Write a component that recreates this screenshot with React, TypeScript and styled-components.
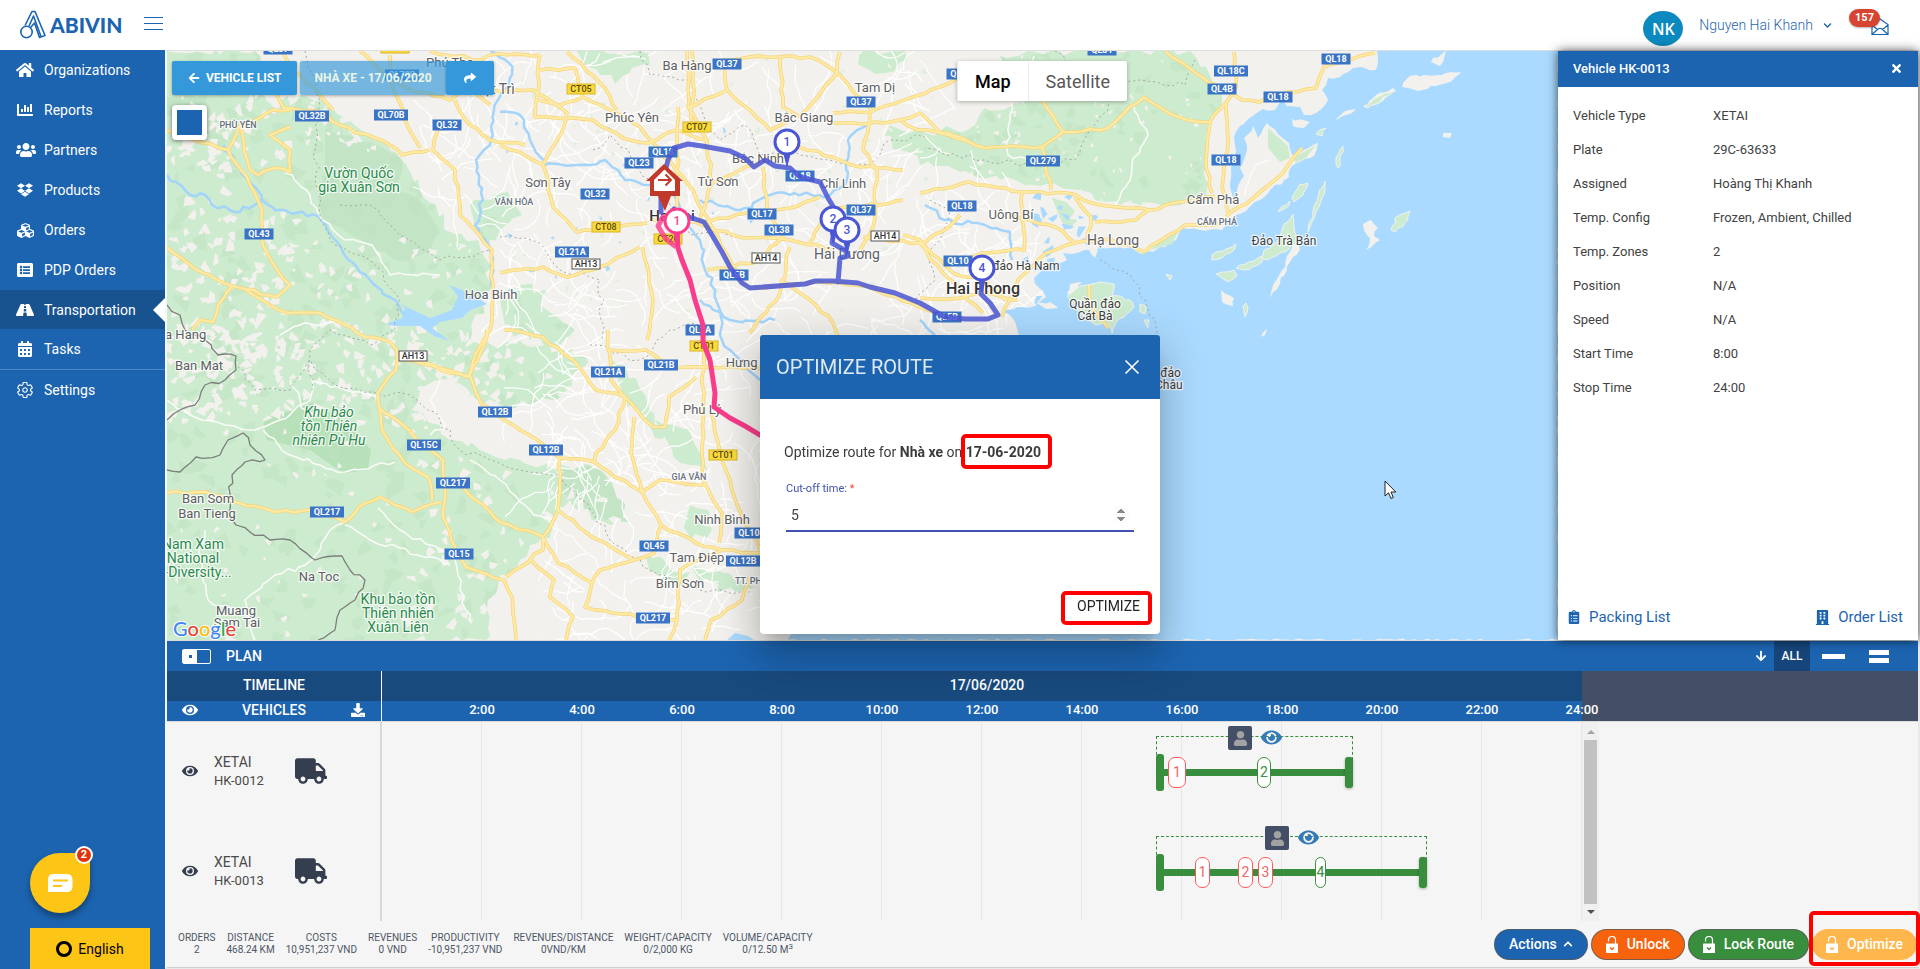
import React from "react";
import styled, { createGlobalStyle, css } from "styled-components";
import {
  FaArrowDown,
  FaArrowLeft,
  FaBuilding,
  FaCalendarAlt,
  FaChartBar,
  FaChevronDown,
  FaChevronUp,
  FaClipboardList,
  FaCubes,
  FaDownload,
  FaDropbox,
  FaEye,
  FaHome,
  FaListAlt,
  FaRoad,
  FaShare,
  FaTimes,
  FaTruck,
  FaUser,
  FaUsers,
} from "react-icons/fa";
import { IoSettingsOutline } from "react-icons/io5";

const BLUE = "#1c64b0";
const NAVY = "#194a7d";
const GREEN = "#388e3c";
const MARK = "#ff0000";

const GlobalStyle = createGlobalStyle`
  *, *::before, *::after { box-sizing: border-box; }
  body { margin: 0; background: #e9e9e9; font-family: Roboto, "Noto Sans", sans-serif; font-size: 14px; color: #424242; }
  button, input { font: inherit; color: inherit; }
  button { border: 0; margin: 0; padding: 0; background: none; cursor: pointer; }
  a { text-decoration: none; color: inherit; }
  svg { display: block; flex: none; }
`;

/* ---------- page frame ---------- */

const Page = styled.div`
  display: flex;
  flex-direction: column;
  min-height: 100vh;
`;

const TopBar = styled.header`
  display: flex;
  align-items: center;
  height: 50px;
  padding: 0 31px 0 20px;
  background: #fff;
`;

const Logo = styled.a`
  display: flex;
  align-items: center;
  gap: 4px;
  color: ${BLUE};
  font: 900 21px/24px Lato, sans-serif;
`;

const MenuButton = styled.button`
  display: flex;
  flex-direction: column;
  gap: 5px;
  width: 19px;
  margin-left: 22px;
  margin-bottom: 3px;
  span { height: 1px; background: ${BLUE}; }
`;

const Account = styled.div`
  display: flex;
  align-items: center;
  gap: 16px;
  margin-left: auto;
`;

const Avatar = styled.div`
  display: grid;
  place-items: center;
  width: 40px;
  height: 35px;
  margin-top: 7px;
  border-radius: 50%;
  background: #0c8abf;
  color: #fff;
  font: 600 16px/20px "Open Sans", sans-serif;
`;

const UserButton = styled.button`
  display: flex;
  align-items: center;
  gap: 10px;
  color: ${BLUE};
  font-size: 14px;
  font-weight: 300;
`;

const Inbox = styled.button`
  position: relative;
  width: 18px;
  height: 18px;
  margin: 4px 0 0 23px;
  color: ${BLUE};
`;

const InboxCount = styled.span`
  position: absolute;
  right: 9px;
  top: -9px;
  padding: 0 6px;
  border-radius: 9px;
  background: #d84432;
  color: #fff;
  font: 700 11px/18px Roboto, sans-serif;
  box-shadow: 0 1px 2px rgba(0, 0, 0, 0.3);
`;

const Body = styled.div`
  display: flex;
  flex: 1;
`;

/* ---------- sidebar ---------- */

const Sidebar = styled.nav`
  display: flex;
  flex-direction: column;
  flex: none;
  width: 165px;
  background: ${BLUE};
`;

const NavLink = styled.a<{ $active?: boolean; $split?: boolean }>`
  position: relative;
  display: flex;
  align-items: center;
  gap: 10px;
  height: ${(p) => (p.$active ? 39 : 40)}px;
  padding-left: 16px;
  color: #fff;
  font-size: 14px;
  ${(p) => p.$split && css`border-top: 1px solid #4c88c6;`}
  ${(p) =>
    p.$active &&
    css`
      background: #18528f;
      &::after {
        content: "";
        position: absolute;
        right: 0;
        top: 8px;
        border: 12px solid transparent;
        border-left-width: 0;
        border-right-color: #fff;
      }
    `}
`;

const NavIcon = styled.span`
  display: grid;
  place-items: center;
  width: 18px;
`;

const SideFooter = styled.div`
  display: flex;
  flex-direction: column;
  align-items: flex-start;
  gap: 15px;
  width: 120px;
  margin: auto 0 0 30px;
`;

const ChatButton = styled.button`
  position: relative;
  display: grid;
  place-items: center;
  width: 60px;
  height: 60px;
  border-radius: 50% 4px 50% 50%;
  background: #fdc516;
  box-shadow: 0 4px 6px rgba(0, 0, 0, 0.35);
`;

const ChatCount = styled.span`
  position: absolute;
  right: -3px;
  top: -7px;
  width: 18px;
  height: 18px;
  border: 2px solid #fff;
  border-radius: 50%;
  background: #e1330d;
  color: #fff;
  font: 700 11px/14px Roboto, sans-serif;
  text-align: center;
`;

const LanguageButton = styled.button`
  display: flex;
  align-items: center;
  justify-content: center;
  gap: 6px;
  width: 100%;
  height: 41px;
  background: #fdc516;
  color: #000;
`;

const Ring = styled.span`
  width: 16px;
  height: 16px;
  border: 3px solid #000;
  border-radius: 50%;
`;

const Main = styled.main`
  display: flex;
  flex-direction: column;
  flex: 1;
  min-width: 0;
  margin: 0 2px 1px 0;
  border-top: 1px solid #dedede;
  border-left: 2px solid #f4f8fb;
`;

/* ---------- map row ---------- */

const MapRow = styled.section`
  display: flex;
  flex: 1;
  min-height: 400px;
  border-bottom: 1px solid #dcdcdc;
`;

const MapArea = styled.div`
  position: relative;
  flex: 1;
  min-width: 0;
  overflow: hidden;
  background: #aadaff;
`;

const MapCanvas = styled.svg`
  position: absolute;
  inset: 0;
  width: 100%;
  height: 100%;
  font-family: Roboto, "Noto Sans", sans-serif;
`;

const MapTools = styled.div`
  position: absolute;
  left: 5px;
  top: 10px;
  display: flex;
  flex-direction: column;
  gap: 10px;
`;

const ToolRow = styled.div`
  display: flex;
`;

const ToolButton = styled.button<{ $clear?: boolean; $gap?: boolean; $pad: number }>`
  display: flex;
  align-items: center;
  gap: 6px;
  height: 34px;
  margin-right: ${(p) => (p.$gap ? 3 : 0)}px;
  padding: 0 ${(p) => p.$pad}px;
  border-radius: 2px;
  background: ${(p) => (p.$clear ? "rgba(52, 152, 219, 0.66)" : "#3498db")};
  color: ${(p) => (p.$clear ? "#eaf5e6" : "#fff")};
  font-size: 12px;
  font-weight: 700;
  box-shadow: 0 1px 3px rgba(0, 0, 0, 0.3);
`;

const AreaButton = styled.button`
  width: 35px;
  height: 35px;
  border: 5px solid #fff;
  border-radius: 4px;
  background: ${BLUE};
  box-shadow: 0 1px 4px rgba(0, 0, 0, 0.5);
`;

const MapType = styled.div`
  position: absolute;
  left: 790px;
  top: 10px;
  display: flex;
  border-radius: 2px;
  background: #fff;
  box-shadow: 0 1px 4px rgba(0, 0, 0, 0.3);
`;

const MapTypeButton = styled.button<{ $on?: boolean }>`
  height: 40px;
  padding: 0 17px;
  border-left: 1px solid #ececec;
  color: ${(p) => (p.$on ? "#000" : "#565656")};
  font-size: 18px;
  font-weight: ${(p) => (p.$on ? 500 : 400)};
`;

const Panel = styled.aside`
  position: relative;
  display: flex;
  flex-direction: column;
  flex: none;
  width: 360px;
  background: #fff;
  box-shadow: 0 0 10px rgba(0, 0, 0, 0.7);
`;

const PanelHead = styled.div`
  display: flex;
  align-items: center;
  justify-content: space-between;
  height: 36px;
  padding: 0 15px 2px;
  background: ${BLUE};
  color: #fff;
  font-size: 13px;
  font-weight: 500;
`;

const Facts = styled.dl`
  display: grid;
  grid-template-columns: 140px 1fr;
  margin: 12px 15px 0;
  font-size: 13px;
  line-height: 34px;
  dd { margin: 0; }
`;

const PanelLinks = styled.div`
  display: flex;
  justify-content: space-between;
  margin-top: auto;
  padding: 0 15px 13px 9px;
  color: ${BLUE};
  font-size: 15px;
  line-height: 20px;
  a { display: flex; align-items: center; gap: 8px; }
`;

/* ---------- plan ---------- */

const PlanBar = styled.div`
  display: flex;
  align-items: center;
  height: 30px;
  padding: 0 16px 0 15px;
  background: ${BLUE};
  color: #fff;
  font-weight: 500;
`;

const PlanToggle = styled.button`
  display: flex;
  width: 29px;
  height: 15px;
  margin-right: 15px;
  border: 1px solid #fff;
  border-radius: 2px;
  &::before { content: ""; width: 14px; height: 100%; border: solid #fff; border-width: 5px 5px 5px 6px; background: ${BLUE}; }
`;

const PlanTools = styled.div`
  display: flex;
  align-items: center;
  height: 100%;
  margin-left: auto;
`;

const PlanTool = styled.button<{ $on?: boolean; $width: number }>`
  display: flex;
  flex-direction: column;
  align-items: center;
  justify-content: center;
  gap: 3px;
  width: ${(p) => p.$width}px;
  height: 100%;
  background: ${(p) => (p.$on ? "#15457a" : "transparent")};
  font-size: 12px;
`;

const Dash = styled.span<{ $width: number }>`
  width: ${(p) => p.$width}px;
  height: 5px;
  background: #fff;
`;

const TimeRow = styled.div<{ $height: number; $tone: string }>`
  display: flex;
  height: ${(p) => p.$height}px;
  background: ${(p) => p.$tone};
  color: #fff;
  font-weight: 500;
`;

const HeadCell = styled.div`
  display: grid;
  grid-template-columns: 46px 1fr 46px;
  align-items: center;
  justify-items: center;
  flex: none;
  width: 215px;
  padding-bottom: 2px;
  border-right: 1px solid #fff;
  text-align: center;
  font-size: 14px;
`;

const Hours = styled.div`
  position: relative;
  flex: 25 0 0;
  line-height: 28px;
  text-align: center;
`;

const Rest = styled.div`
  flex: 7 0 0;
  background: #434f66;
`;

const Hour = styled.span`
  position: absolute;
  top: 1px;
  width: 50px;
  margin-left: -25px;
  z-index: 1;
  font-size: 13px;
  line-height: 16px;
  text-align: center;
`;

const DayLabel = styled.span`
  padding-left: 10px;
`;

const Schedule = styled.div`
  display: flex;
  background: #f5f5f5;
  border-top: 1px solid #dcdcdc;
`;

const Vehicles = styled.div`
  flex: none;
  width: 215px;
  border-right: 2px solid #d9d9d9;
`;

const VehicleRow = styled.div`
  display: grid;
  grid-template-columns: 16px 65px 32px;
  column-gap: 16px;
  align-items: center;
  height: 100px;
  padding: 0 0 2px 15px;
  color: #343e4f;
  &:last-child { height: 99px; }
`;

const VehicleName = styled.div`
  color: #4a4a4a;
  font-size: 14px;
  line-height: 20px;
  small { display: block; font-size: 13px; line-height: 18px; }
`;

const Tracks = styled.div`
  flex: 25 0 0;
  background-image: linear-gradient(to left, #e7e7e7 1px, transparent 1px);
  background-size: calc(100% / 12) 100%;
`;

const Track = styled.div`
  position: relative;
  height: 100px;
  &:last-child { height: 99px; }
`;

/* everything on a track sits at its hour, so it is placed by percent of the day */
const Span = styled.div`
  position: absolute;
  top: 14px;
  height: 40px;
  border: 1px dashed ${GREEN};
  border-bottom: 0;
`;

const Line = styled.div`
  position: absolute;
  top: 47px;
  height: 7px;
  background: ${GREEN};
`;

const Handle = styled.div<{ $end?: boolean }>`
  position: absolute;
  top: ${(p) => (p.$end ? 35 : 32)}px;
  width: 8px;
  height: ${(p) => (p.$end ? 31 : 37)}px;
  margin-left: ${(p) => (p.$end ? -8 : 0)}px;
  border-radius: 3px;
  background: ${GREEN};
  box-shadow: ${(p) => (p.$end ? "0 1px 3px rgba(0,0,0,.3)" : "none")};
`;

const Stop = styled.button<{ $late?: boolean }>`
  position: absolute;
  top: 35px;
  height: 31px;
  border: 1px solid ${(p) => (p.$late ? "#ff5a5a" : GREEN)};
  border-radius: 7px;
  background: #fff;
  color: ${(p) => (p.$late ? "#f06464" : GREEN)};
  font-size: 14px;
  line-height: 29px;
  text-align: center;
`;

const Driver = styled.button`
  position: absolute;
  top: 4px;
  display: grid;
  place-items: center;
  width: 24px;
  height: 24px;
  border-radius: 2px;
  background: #434f66;
  color: #a2a2a2;
`;

const Watch = styled.button`
  position: absolute;
  top: 5px;
  margin-left: 33px;
  color: #337ab7;
`;

const ScrollArea = styled.div`
  flex: 7 0 0;
`;

const ScrollRail = styled.div`
  display: flex;
  flex-direction: column;
  align-items: center;
  justify-content: space-between;
  width: 17px;
  height: 100%;
  padding: 8px 0 7px;
  background: #f0f0f0;
`;

const ScrollThumb = styled.div`
  flex: 1;
  width: 13px;
  margin: 6px 0;
  background: #c1c1c1;
`;

const Tip = styled.span<{ $up?: boolean }>`
  border: solid transparent;
  border-width: 0 4px;
  ${(p) => (p.$up ? "border-bottom: 4px solid #a3a3a3;" : "border-top: 4px solid #505050;")}
`;

const Footer = styled.footer`
  display: flex;
  align-items: center;
  height: 47px;
  padding: 0 1px 0 11px;
  background: #f5f5f5;
  border-bottom: 1px solid #cfcfcf;
`;

const Totals = styled.dl`
  display: flex;
  gap: 11px;
  margin: 0;
  color: #4d5666;
  font-size: 10px;
  line-height: 12px;
  text-align: center;
  text-transform: uppercase;
  dd { margin: 0; }
  sup { font-size: 8px; line-height: 0; }
`;

const Actions = styled.div`
  display: flex;
  gap: 3px;
  margin-left: auto;
`;

const Pill = styled.button<{ $tone: string; $flat?: boolean; $tight?: boolean }>`
  position: relative;
  display: flex;
  align-items: center;
  justify-content: center;
  gap: ${(p) => (p.$tight ? 6 : 9)}px;
  height: 31px;
  padding: 0 ${(p) => (p.$flat ? 13 : 14)}px;
  border: 1px solid ${(p) => (p.$flat ? p.$tone : "rgba(90, 90, 90, 0.8)")};
  border-radius: 16px;
  background: ${(p) => p.$tone};
  color: #fff;
  font-size: 14px;
  font-weight: 500;
`;

const Highlight = styled.span<{ $inset: string }>`
  position: absolute;
  inset: ${(p) => p.$inset};
  border: 4px solid ${MARK};
  border-radius: 5px;
  pointer-events: none;
`;

/* ---------- dialog ---------- */

const DialogLayer = styled.div`
  position: fixed;
  inset: 0;
  z-index: 5;
  display: grid;
  place-items: center;
  pointer-events: none;
`;

const Dialog = styled.form`
  width: 400px;
  border-radius: 4px;
  background: #fff;
  box-shadow: 0 11px 15px -7px rgba(0, 0, 0, 0.2), 0 24px 38px 3px rgba(0, 0, 0, 0.14), 0 9px 46px 8px rgba(0, 0, 0, 0.12);
  pointer-events: auto;
`;

const DialogHead = styled.div`
  display: flex;
  align-items: center;
  justify-content: space-between;
  height: 64px;
  padding: 0 20px 0 16px;
  border-radius: 3px 3px 0 0;
  background: ${BLUE};
  color: #dfe9f4;
  h2 { margin: 0; font-size: 20px; font-weight: 400; }
`;

const DialogBody = styled.div`
  padding: 43px 24px 0;
  p { margin: 0; line-height: 20px; color: #3c3c3c; }
`;

const Date = styled.b`
  position: relative;
`;

const Field = styled.label`
  display: block;
  margin: 18px 2px 0;
  color: #3f51b5;
  font-size: 11px;
  line-height: 18px;
  i { color: #f44336; font-style: normal; }
`;

const NumberInput = styled.input`
  display: block;
  width: 100%;
  height: 34px;
  padding: 6px 5px 4px;
  border: 0;
  border-bottom: 2px solid #3f51b5;
  outline: 0;
  background: none;
  color: #424242;
  font-size: 14px;
  &::-webkit-inner-spin-button { opacity: 1; height: 16px; }
`;

const DialogActions = styled.div`
  display: flex;
  justify-content: flex-end;
  padding: 56px 20px 10px 0;
`;

const OptimizeButton = styled.button`
  position: relative;
  height: 36px;
  color: #222;
  font-size: 14px;
`;

const Pointer = styled.svg`
  position: absolute;
  left: 1217px;
  top: 429px;
`;

/* ---------- map drawing ---------- */

type Pt = [number, number];

const rng = (seed: number) => () => {
  seed = (seed + 0x6d2b79f5) | 0;
  let t = Math.imul(seed ^ (seed >>> 15), 1 | seed);
  t = (t + Math.imul(t ^ (t >>> 7), 61 | t)) ^ t;
  return ((t ^ (t >>> 14)) >>> 0) / 4294967296;
};

const parse = (s: string): Pt[] => s.split(" ").map((p) => p.split(",").map(Number) as Pt);

/* breaks a coarse polyline into short wobbling steps, as surveyed roads look */
const wobble = (s: string, amount: number, step = 9): string => {
  const pts = parse(s);
  const rand = rng(pts[0][0] * 31 + pts[0][1]);
  const out: Pt[] = [pts[0]];
  for (let i = 1; i < pts.length; i++) {
    const [ax, ay] = pts[i - 1];
    const [bx, by] = pts[i];
    const n = Math.max(1, Math.round(Math.hypot(bx - ax, by - ay) / step));
    for (let k = 1; k < n; k++) {
      const t = k / n;
      out.push([ax + (bx - ax) * t + (rand() - 0.5) * amount, ay + (by - ay) * t + (rand() - 0.5) * amount]);
    }
    out.push([bx, by]);
  }
  return out.map(([x, y]) => `${x.toFixed(1)},${y.toFixed(1)}`).join(" ");
};

const shards = (seed: number, count: number, x: number, y: number, w: number, h: number, size: number): string => {
  const rand = rng(seed);
  let d = "";
  for (let i = 0; i < count; i++) {
    const cx = x + rand() * w;
    const cy = y + rand() * h;
    const a = rand() * 6.28;
    const l = size * (0.4 + rand());
    const t = size * (0.2 + rand() * 0.5);
    d += `M${cx.toFixed(1)} ${cy.toFixed(1)}l${(Math.cos(a) * l).toFixed(1)} ${(Math.sin(a) * l).toFixed(1)}l${(Math.cos(a + 2) * t).toFixed(1)} ${(Math.sin(a + 2) * t).toFixed(1)}l${(Math.cos(a + 2.8) * l * 0.6).toFixed(1)} ${(Math.sin(a + 2.8) * l * 0.6).toFixed(1)}z`;
  }
  return d;
};

const lanes = (seed: number, count: number, x: number, y: number, w: number, h: number): string => {
  const rand = rng(seed);
  let d = "";
  for (let i = 0; i < count; i++) {
    d += `M${(x + rand() * w).toFixed(1)} ${(y + rand() * h).toFixed(1)}`;
    let a = rand() * 6.28;
    const n = 3 + Math.floor(rand() * 6);
    for (let k = 0; k < n; k++) {
      a += (rand() - 0.5) * 1.3;
      d += `l${(Math.cos(a) * 8).toFixed(1)} ${(Math.sin(a) * 8).toFixed(1)}`;
    }
  }
  return d;
};

const FORESTS = [
  "167,51 255,51 262,90 272,104 300,95 330,105 345,122 395,152 410,172 420,190 436,205 450,232 478,240 488,262 490,290 470,340 500,345 520,340 562,350 588,362 572,385 556,400 530,405 500,405 480,400 458,385 440,380 420,392 412,410 440,425 450,440 480,450 520,460 556,470 590,465 625,505 630,522 600,520 570,500 556,505 552,530 530,545 520,560 500,575 488,600 486,640 167,640",
  "470,205 490,200 508,192 522,215 500,230 488,250 476,230",
  "500,300 520,285 545,290 540,305 575,330 560,345 530,340 505,325",
  "577,51 640,51 650,65 632,68 615,84 600,75 585,65",
  "860,51 905,51 900,62 875,74 858,62",
  "1000,56 1050,51 1190,51 1215,88 1222,100 1208,122 1206,180 1200,200 1162,205 1120,205 1095,200 1080,190 1040,186 1000,180 960,172 920,165 900,150 880,135 890,125 925,133 975,125 985,108 1025,105",
  "1052,198 1066,202 1078,220 1070,228 1060,218",
  "612,360 625,366 645,395 655,425 668,432 655,438 640,415 622,392",
  "655,420 690,428 708,470 690,465 672,450",
  "690,505 708,510 712,530 690,540 686,520",
  "645,555 690,572 675,585 650,572",
  "690,565 740,580 760,590 735,592 700,582",
];

const RESERVES = [
  "325,128 370,142 402,158 398,190 425,205 440,232 430,250 405,262 375,250 350,235 325,222 318,200 325,170",
  "160,97 207,95 207,110 185,118 167,116",
  "558,470 595,465 630,505 628,522 606,520 580,502 560,490",
];

const PU_HU = "263,420 313,402 350,425 371,450 368,470 343,473 310,450 267,440";

const SEA =
  "1377,51 1376,70 1365,68 1353,68 1340,77 1328,78 1322,90 1328,100 1316,113 1304,115 1300,107 1287,106 1282,100 1275,110 1263,109 1247,120 1240,126 1234,137 1236,150 1231,167 1230,187 1234,200 1238,186 1244,176 1240,168 1247,150 1244,138 1253,126 1258,138 1267,123 1278,134 1289,143 1292,155 1304,150 1318,143 1314,156 1300,162 1291,167 1289,177 1271,189 1262,199 1255,202 1246,211 1236,215 1222,230 1200,230 1181,228 1176,240 1165,247 1142,254 1132,247 1112,248 1098,247 1095,258 1089,250 1080,252 1063,253 1067,260 1061,263 1050,262 1042,270 1034,278 1038,287 1046,297 1035,306 1018,307 1002,311 1010,315 1014,320 1019,335 1010,420 940,520 860,580 810,610 793,632 788,640 1558,640 1558,51";

const LAND_ISLANDS = [
  "1402,87 1410,76 1461,72 1447,83 1436,86 1418,91 1408,88",
  "1363,108 1376,95 1393,88 1396,91 1378,104",
  "1335,120 1345,111 1360,106 1352,113 1338,119",
  "1431,62 1446,51 1440,66",
  "1292,119 1310,122 1304,128 1293,126",
  "1363,224 1371,220 1378,228 1374,236 1380,240 1366,250 1370,238 1364,230",
  "1221,290 1234,298 1233,306 1222,302",
  "1272,288 1282,270 1290,252 1296,240 1300,250 1290,262 1280,284 1270,298",
  "1261,337 1267,329 1265,335",
  "1443,133 1452,133 1450,138 1443,137",
  "1112,312 1100,305 1067,293 1070,284 1082,282 1072,300 1078,312",
  "1037,303 1050,302 1058,308 1046,309",
];

const GREEN_ISLANDS = [
  "1067,296 1080,286 1100,282 1114,284 1112,295 1130,300 1134,307 1124,317 1116,323 1112,333 1108,324 1096,325 1083,316",
  "1364,106 1380,96 1394,89 1388,96 1368,108",
  "1391,230 1395,218 1410,211 1408,220 1395,232",
  "1338,168 1336,158 1343,146 1340,166",
  "1308,232 1314,206 1325,181 1322,198 1312,222",
  "1292,198 1300,184 1308,183 1303,195 1294,202",
  "1278,212 1290,201 1286,208",
  "1258,258 1280,238 1284,224 1293,214 1294,228 1296,244 1276,256 1268,260",
  "1240,265 1262,256 1262,262 1244,270 1236,268",
  "1212,255 1236,244 1234,250 1222,258 1212,260",
  "1216,274 1234,270 1237,276 1228,282",
  "1243,306 1246,303 1248,308 1245,317",
  "1140,304 1146,306 1145,314 1140,312",
  "1166,274 1172,276 1170,280",
  "1144,320 1149,320 1148,328",
  "1316,134 1326,128 1322,136",
];

const ROADS = [
  "282,51 288,62 284,80 277,95 284,108 320,112 340,125 390,145 402,155 430,150",
  "298,72 320,95 333,110",
  "290,110 272,110 256,120 240,125 228,150 250,185 262,210 263,245 277,270 290,285 277,297 245,289 232,286 195,269 180,257 167,247",
  "167,130 195,140 228,150",
  "240,125 244,150 250,170 258,175 275,168 290,172 290,150 270,135 290,127",
  "245,289 265,302 288,313 320,313 345,325 365,337 390,342 397,350 396,370 378,393",
  "397,357 425,362 450,373 468,377 475,355 490,330 493,300 492,250 460,215 455,170 433,150 440,120",
  "232,286 218,305 213,322 200,320 192,330",
  "390,55 392,85 405,120 420,148",
  "360,51 380,70 410,90 450,100 470,90 490,105",
  "430,51 480,60 490,55 540,55",
  "455,100 470,125 490,140 525,145",
  "378,393 382,430 405,463 428,477 432,500",
  "378,407 405,427 443,460 445,500 443,517 455,547 466,567 504,580 512,597 516,640",
  "167,493 206,492 236,502 275,512 313,510 345,522 359,507 380,497 412,512 441,502",
  "462,485 475,500 500,522 543,537 543,550 506,577",
  "487,330 484,345 470,375 481,403 520,430 560,458 594,462 615,477 642,492 661,525 696,543 722,550 760,553",
  "560,458 558,510 543,537 558,563 592,583 585,607 612,613 657,618 677,620",
  "558,510 592,537 634,560 654,553 661,525",
  "634,560 600,570 592,583",
  "413,360 440,368 470,377",
  "608,330 611,380 625,397 615,430 596,453 594,462",
  "504,330 543,337 573,360 596,390 625,397",
  "703,330 703,480 722,513 719,543",
  "711,413 723,463 738,507 760,550",
  "642,492 660,480 677,482 707,485",
  "722,550 680,570 677,620 669,640",
  "625,397 654,427 665,427 669,397 696,377",
  "634,417 631,453 642,492",
  "749,577 742,600 711,620 705,640",
  "531,560 554,580 550,597 573,617 566,640",
  "608,350 646,350 669,367 703,367 760,368",
  "687,51 688,107 707,140 712,183 700,223",
  "692,51 693,100 690,130",
  "678,107 677,207",
  "540,55 535,117 593,120 623,138 650,143",
  "583,97 610,110 640,127 653,143",
  "567,52 600,83 617,110",
  "490,90 533,90 567,113 565,123 543,165 553,207 577,232 647,223",
  "540,70 575,68 583,97 560,105 536,100",
  "688,107 727,90 723,60 767,57 810,57 833,70 873,112",
  "727,90 770,130 790,120",
  "780,57 783,107 800,117",
  "840,52 837,73 815,100 800,117",
  "833,113 870,112 950,83 960,76",
  "870,112 863,150 877,170 873,227 860,250",
  "800,147 860,167 903,170",
  "833,123 866,124 900,120 918,130 947,133 985,148",
  "650,220 700,223 747,213 790,208 820,197",
  "650,143 677,130 707,140",
  "653,143 687,183 707,217 730,260 747,287",
  "643,247 653,300 647,340",
  "500,273 543,267 567,277 600,267 640,247",
  "780,280 810,300 833,323 840,340",
  "763,167 767,207 783,237 760,260 733,267 707,270",
  "790,247 780,293 750,333",
  "863,237 920,243 943,273 983,313",
  "750,288 805,284 838,282 870,287 945,317",
  "712,183 740,170 800,147",
  "500,145 520,152 543,165",
  "697,223 735,236 790,240 832,250",
  "808,245 820,225 834,208 880,205 903,200",
  "1165,51 1202,77 1242,100 1259,102 1287,92 1316,88 1324,67 1349,60 1375,53",
  "1234,52 1236,87 1226,103 1210,122 1181,118 1161,108 1144,97 1124,113 1108,128 1063,132 1042,100",
  "1063,132 1042,147 985,148 940,133 920,113 900,120",
  "1042,147 1051,190",
  "920,193 969,182 1022,192 1067,193 1100,205 1149,210 1181,202 1215,197",
  "1210,122 1206,160 1212,193",
  "1226,103 1228,140 1222,187 1228,213",
  "1302,148 1283,173 1259,193 1226,217",
  "1222,223 1185,225 1144,252 1112,240 1075,243 1046,253 1018,280 1002,317",
  "1075,197 1091,217 1088,243",
  "1010,215 1030,220 1055,227 1075,243",
  "1095,222 1136,220 1149,210",
  "1022,192 1024,250 981,253 965,265",
  "903,235 920,240 953,273 985,280 1005,300",
  "960,215 949,227 920,245",
  "920,298 961,298 985,293 1018,300",
  "1089,285 1090,305 1108,328",
];

const RIVERS = [
  "167,175 190,195 205,195 212,205 240,212 262,200 275,210 318,216 335,240 352,262 370,280 395,300 405,315",
  "490,51 508,62 512,75 494,110 490,145 476,160 483,200 475,225 490,250 494,290",
  "500,112 520,115 530,140 545,165 590,165 605,160 625,180 650,185 675,190 680,215 700,240 705,270 715,290 720,310 722,340 740,360 760,380",
  "224,145 240,170 256,188 262,200",
  "700,200 740,210 770,195 830,195 845,185 848,140 870,120",
  "925,205 945,220 985,225 1010,232 1012,260",
  "700,300 730,320 775,320",
  "920,320 935,335",
];

const BOUNDARIES = [
  "305,51 320,100 315,150 320,215 330,240 370,260 400,300 395,330 370,345 330,330 310,350 312,390",
  "340,205 370,205 400,235 440,260 490,250",
  "238,367 255,390 290,390 310,360 335,385 380,395 410,395 440,420 460,450 520,470 560,475 590,510 610,540 650,570 700,590 750,592",
  "640,51 650,75 690,80 705,120 720,140 745,125 760,155 800,155 830,160 870,165 890,140 925,137",
  "593,150 610,135 650,180 690,235 740,235",
  "1055,51 1090,80 1110,85 1108,110 1090,130 1075,160 1030,165 985,160 925,148",
  "590,345 640,360 670,330 705,320",
  "1100,260 1130,275 1145,300 1155,320 1161,345",
  "500,237 540,243 560,270 600,280 602,340",
  "930,200 950,210 940,240 930,250 935,280 915,300",
  "1109,85 1140,80 1185,85 1195,60",
];

const BORDERS = [
  "167,305 180,315 185,330 205,340 218,355 236,356 236,370 225,380 205,385 195,405 180,410 167,420",
  "167,470 180,472 196,457 220,455 228,440 243,433 250,445 265,460 245,462 232,475 228,515 236,525 270,540 290,540 315,560 342,556 350,570 365,580 355,600 340,610 335,630 318,640",
];

const TRAILS = [
  "285,173 310,195 322,220 345,240 372,245 390,275 440,275",
  "280,335 300,325 330,322 350,325",
  "167,400 190,415 225,425 255,430 280,420 310,400 312,380 345,390 378,397",
  "263,430 290,455 320,465 345,472 375,465 395,462",
  "378,508 400,530 440,550 455,560 460,590 470,620",
  "345,522 330,530 320,550 305,565 275,575 245,600 255,640",
  "345,525 370,540 400,548 450,565",
  "470,460 500,480 530,510 560,530 590,555 600,570",
  "440,380 430,400 445,425 430,435",
  "1134,105 1148,135 1132,165 1130,180 1115,205",
  "1034,56 1018,80 1010,115 1008,155 1040,160",
  "1270,160 1255,165 1245,195",
  "920,60 940,90 955,110",
  "313,430 300,400 290,380",
  "205,530 200,560 208,600 235,610",
];

type Sign = [string, number, number];

const SIGNS: Sign[] = [
  ["QL37", 278, 49], ["QL70B", 402, 75], ["QL32B", 312, 116], ["QL70B", 391, 115], ["QL32", 447, 125], ["QL43", 259, 234],
  ["QL37", 727, 64], ["QL37", 961, 74], ["QL37", 861, 102], ["QL18", 663, 152], ["QL23", 639, 163], ["QL18", 800, 176],
  ["QL32", 595, 194], ["QL37", 861, 210], ["QL17", 762, 214], ["QL38", 779, 230], ["QL18", 962, 206], ["QL21A", 572, 252],
  ["QL5B", 734, 275], ["QL10", 958, 261], ["QL5B", 947, 317], ["QL1A", 700, 330], ["QL21B", 661, 365], ["QL21A", 608, 372],
  ["QL12B", 495, 412], ["QL12B", 546, 450], ["QL15C", 424, 445], ["QL217", 453, 483], ["QL217", 327, 512], ["QL15", 459, 554],
  ["QL45", 654, 546], ["QL10", 749, 533], ["QL12B", 743, 561], ["QL217", 653, 618], ["QL31", 1102, 50], ["QL18C", 1231, 71],
  ["QL4B", 1222, 89], ["QL18", 1336, 59], ["QL18", 1278, 97], ["QL279", 1043, 161], ["QL18", 1226, 160],
  ["CT02", 395, 48], ["CT05", 581, 89], ["CT07", 697, 127], ["CT08", 606, 227], ["CT20", 668, 239], ["CT01", 704, 346], ["CT01", 723, 455],
  ["AH13", 413, 356], ["AH13", 586, 264], ["AH14", 766, 258], ["AH14", 885, 236],
];

type Place = [string, number, number, number?, string?];

const TOWNS: Place[] = [
  ["Phú Thọ", 450, 63], ["Việt Trì", 493, 89, 14], ["Hoa Binh", 491, 295], ["Na Hang", 181, 335], ["Ban Mat", 199, 366],
  ["Ba Hàng", 687, 66], ["Tam Dị", 875, 88], ["Phúc Yên", 632, 118], ["Bắc Giang", 804, 118], ["Bắc Ninh", 758, 159],
  ["Sơn Tây", 548, 183], ["Từ Sơn", 718, 182], ["Chí Linh", 843, 184], ["Uông Bí", 1011, 215], ["Hải Dương", 847, 254, 14],
  ["Hưng Yên", 754, 363], ["Phủ Lý", 702, 410], ["Ninh Bình", 722, 520], ["Tam Điệp", 697, 558], ["Bỉm Sơn", 680, 584],
  ["Ban Som", 208, 499], ["Ban Tieng", 207, 514], ["Na Toc", 319, 577], ["Muang", 236, 611], ["Sam Tai", 237, 623],
  ["Cẩm Phả", 1213, 200], ["Hạ Long", 1113, 240, 14],
];

const BIG: Place[] = [["Ha Noi", 672, 216, 15], ["Hai Phong", 983, 289, 16]];

const DARK: Place[] = [
  ["đảo Hà Nam", 1026, 266, 12], ["Đảo Trà Bản", 1284, 241, 12], ["Quần đảo", 1095, 304, 12], ["Cát Bà", 1095, 316, 12],
  ["Quần đảo", 1155, 373, 12], ["Long Châu", 1154, 385, 12],
];

const DISTRICTS: Place[] = [
  ["PHÙ YÊN", 238, 125, 9], ["VÂN HÒA", 514, 202, 9], ["GIA VÂN", 689, 477, 9], ["TT. PHÁT", 754, 581, 9], ["CẨM PHẢ", 1217, 222, 9],
];

const PARKS: Place[] = [
  ["Vườn Quốc", 359, 173, 14], ["gia Xuân Sơn", 359, 187, 14],
  ["Khu bảo", 329, 412, 14, "italic"], ["tồn Thiên", 329, 426, 14, "italic"], ["nhiên Pù Hu", 329, 440, 14, "italic"],
  ["Khu bảo tồn", 398, 599, 14], ["Thiên nhiên", 398, 613, 14], ["Xuân Liên", 398, 627, 14],
  ["Nam Xam", 193, 544, 14], ["National", 193, 558, 14], ["Bio-Diversity...", 188, 572, 14],
];

const Labels = ({ items, color, weight = 400 }: { items: Place[]; color: string; weight?: number }) => (
  <g fill={color} fontWeight={weight} textAnchor="middle" stroke="#fff" strokeWidth={2.5} strokeOpacity={0.8} strokeLinejoin="round" paintOrder="stroke">
    {items.map(([text, x, y, size = 13, style]) => (
      <text key={text + x + y} x={x} y={y + Math.round(size / 3)} fontSize={size} fontStyle={style}>
        {text}
      </text>
    ))}
  </g>
);

const RoadSign = ({ sign: [text, x, y] }: { sign: Sign }) => {
  const kind = text.slice(0, 2);
  const w = text.length * 6 + (text.length > 4 ? 3 : 4);
  const [fill, line, ink] =
    kind === "CT" ? ["#fbdb3c", "#d9b526", "#5b4a0c"] : kind === "AH" ? ["#fff", "#555", "#333"] : ["#3a74c6", "#3a74c6", "#fff"];
  return (
    <g>
      <rect x={x - w / 2} y={y - 5} width={w} height={10} fill={fill} stroke={line} />
      <text x={x} y={y + 3} fontSize={9} fontWeight={kind === "QL" ? 700 : 500} fill={ink} textAnchor="middle">
        {text}
      </text>
    </g>
  );
};

const Pin = ({ n, x, y, color }: { n: number; x: number; y: number; color: string }) => (
  <g>
    <path d={`M${x - 3} ${y + 12}L${x} ${y + 24}L${x + 3} ${y + 12}z`} fill={color} stroke={color} />
    <circle cx={x} cy={y} r={12} fill="#fff" stroke={color} strokeWidth={3} />
    <text x={x} y={y + 4} fontSize={12} fontWeight={500} fill={color} textAnchor="middle">
      {n}
    </text>
  </g>
);

const ROUTE_BLUE = "#4a56d4";
const ROUTE_PINK = "#fa3c8c";

const RegionMap = () => (
  <MapCanvas viewBox="167 51 1391 589" preserveAspectRatio="xMinYMin slice" role="img" aria-label="Route map">
    <defs>
      <clipPath id="forest">
        {FORESTS.map((p) => <polygon key={p} points={wobble(p, 10, 8)} />)}
      </clipPath>
    </defs>
    <rect x={167} y={51} width={1391} height={589} fill="#f3f1ed" />
    <path d={shards(5, 90, 490, 51, 450, 280, 6)} fill="#d6eed6" opacity={0.6} />
    <g clipPath="url(#forest)">
      <rect x={167} y={51} width={1391} height={589} fill="#cdebce" />
      {RESERVES.map((p) => <polygon key={p} points={wobble(p, 5)} fill="#c3e5c6" />)}
      <polygon points={PU_HU} fill="#b7e1b8" />
      <path d={shards(11, 420, 167, 51, 430, 590, 16)} fill="#bfe0c2" opacity={0.45} />
      <path d={shards(21, 190, 167, 90, 130, 330, 10)} fill="#f3f1ed" />
      <path d={shards(22, 120, 290, 51, 200, 100, 8)} fill="#f3f1ed" />
      <path d={shards(23, 170, 167, 320, 340, 100, 10)} fill="#f3f1ed" />
      <path d={shards(24, 130, 400, 340, 220, 290, 10)} fill="#f3f1ed" />
      <path d={shards(25, 60, 260, 240, 230, 110, 8)} fill="#f3f1ed" />
      <path d={shards(26, 40, 167, 420, 220, 220, 6)} fill="#f3f1ed" />
      <path d={shards(27, 130, 880, 51, 350, 160, 5)} fill="#f3f1ed" />
      <path d={shards(28, 90, 930, 51, 290, 150, 12)} fill="#bfe0c2" opacity={0.45} />
    </g>
    <path d={lanes(31, 260, 490, 51, 440, 300)} fill="none" stroke="#fff" strokeWidth={1.2} />
    <path d={lanes(32, 160, 540, 350, 220, 290)} fill="none" stroke="#fff" strokeWidth={1.2} />
    <path d={lanes(33, 50, 920, 190, 100, 140)} fill="none" stroke="#fff" strokeWidth={1.2} />
    <path d={lanes(34, 24, 410, 60, 90, 130)} fill="none" stroke="#fff" strokeWidth={1.2} />
    <polygon points={wobble(SEA, 3, 6)} fill="#aadaff" />
    <polygon points="727,640 735,633 748,636 754,640" fill="#aadaff" />
    <polygon points="386,324 402,318 405,308 400,304 430,318 452,310 458,296 449,285 462,290 478,298 487,304 470,310 462,318 440,322 432,328 450,341 434,336 420,326 395,326" fill="#aadaff" />
    <path d={shards(41, 26, 1028, 190, 70, 110, 10)} fill="#aadaff" />
    <path d={shards(42, 22, 490, 120, 260, 180, 5)} fill="#aadaff" />
    {LAND_ISLANDS.map((p) => <polygon key={p} points={wobble(p, 3, 5)} fill="#f3f1ed" />)}
    {GREEN_ISLANDS.map((p) => <polygon key={p} points={wobble(p, 3, 5)} fill="#cdebce" stroke="#f3f1ed" />)}
    <polygon points="1268,128 1288,146 1290,158 1280,162 1268,148" fill="#cdebce" />
    <polygon points="1293,158 1316,145 1306,158 1296,163" fill="#cdebce" />
    <polygon points="1150,250 1166,235 1178,232 1172,244" fill="#cdebce" />
    <g fill="none" strokeLinejoin="round">
      <g stroke="#a3d4fb" strokeWidth={2.5}>
        {RIVERS.map((p) => <polyline key={p} points={wobble(p, 5, 6)} />)}
      </g>
      <g stroke="#fbfcfa" strokeWidth={1.5}>
        {TRAILS.map((p) => <polyline key={p} points={wobble(p, 5, 7)} />)}
      </g>
      <g stroke="#a5a8a3" strokeWidth={1} strokeDasharray="2 3">
        {BOUNDARIES.map((p) => <polyline key={p} points={wobble(p, 6, 8)} />)}
      </g>
      <g stroke="#7b7f7c" strokeWidth={1.3}>
        {BORDERS.map((p) => <polyline key={p} points={wobble(p, 4, 7)} />)}
      </g>
      <g stroke="#f6d679" strokeWidth={3.6}>
        {ROADS.map((p) => <polyline key={p} points={wobble(p, 3)} />)}
      </g>
      <g stroke="#ffeaa6" strokeWidth={2}>
        {ROADS.map((p) => <polyline key={p} points={wobble(p, 3)} />)}
      </g>
    </g>
    {SIGNS.map((s) => <RoadSign key={s.join()} sign={s} />)}
    <Labels items={TOWNS} color="#5d5f63" />
    <Labels items={DARK} color="#3f3f3f" />
    <Labels items={BIG} color="#333" weight={500} />
    <Labels items={DISTRICTS} color="#68717f" weight={500} />
    <Labels items={PARKS} color="#2a8a4c" />
    <g fill="none" stroke={ROUTE_BLUE} strokeWidth={5} strokeLinejoin="round" strokeLinecap="round" opacity={0.85}>
      <polyline points="661,212 661,190 666,168 668,160 674,148 688,144 702,146 730,151 745,158 754,167 765,160 775,166 790,168 800,177 820,182 828,198 834,208 834,232 832,243 846,251 848,256 840,258 838,282" />
      <polyline points="674,209 680,215 695,219 704,222 712,235 722,252 730,267 742,283 750,288 805,284 815,281 833,281 858,283 870,287 895,293 920,303 945,317 965,319 988,319 998,315 990,303 981,294 982,280" />
    </g>
    <g fill="none" stroke={ROUTE_PINK} strokeWidth={5} strokeLinejoin="round">
      <polyline points="664,215 658,226 665,238 676,247" opacity={0.8} />
      <polyline points="677,232 678,248 682,260 690,280 695,300 703,325 703,342 710,360 715,393 714,407 730,418 745,426 770,441" />
    </g>
    <path d="M646 181L664 164L683 181H680V196H671L665 211L658 196H650V181z" fill="#c0392b" />
    <path d="M654 180L664.500 169.500L675 180V191H654z" fill="#fff" />
    <path d="M658 180H670M665.500 174.500L671 180L665.500 185.500" stroke="#c0392b" strokeWidth={2} fill="none" />
    <Pin n={1} x={787} y={142} color={ROUTE_BLUE} />
    <Pin n={2} x={833} y={219} color={ROUTE_BLUE} />
    <Pin n={3} x={847} y={230} color={ROUTE_BLUE} />
    <Pin n={4} x={982} y={268} color={ROUTE_BLUE} />
    <Pin n={1} x={677} y={221} color={ROUTE_PINK} />
    <text x={173} y={636} fontSize={20} fontFamily="Lato, sans-serif" fontWeight={500} stroke="#fff" strokeWidth={2} paintOrder="stroke">
      <tspan fill="#4285f4">G</tspan>
      <tspan fill="#ea4335">o</tspan>
      <tspan fill="#fbbc05">o</tspan>
      <tspan fill="#4285f4">g</tspan>
      <tspan fill="#34a853">l</tspan>
      <tspan fill="#ea4335">e</tspan>
    </text>
  </MapCanvas>
);

/* ---------- small drawings ---------- */

const LogoMark = () => (
  <svg width="26" height="30" viewBox="0 0 26 30" fill="none" stroke={BLUE} strokeWidth="1.6" strokeLinejoin="round">
    <circle cx="6.500" cy="22" r="5.700" />
    <path d="M5 15.500L12 1.500H15L25 25.500L19.500 27.500L14.500 13L10.500 17.500" />
    <path d="M9 16L13.500 6L21 26.500" />
  </svg>
);

const EnvelopeOpen = () => (
  <svg width="18" height="18" viewBox="0 0 18 18" fill="none" stroke="currentColor" strokeWidth="1.200">
    <path d="M1 6.500L9 1L17 6.500V16.500H1zM1 7L6.500 11.500M17 7L11.500 11.500M1 16.500L7 11Q9 9.500 11 11L17 16.500" />
  </svg>
);

const Lock = ({ tone }: { tone: string }) => (
  <svg width="12" height="17" viewBox="0 0 12 17" fill="none">
    <path d="M2.500 5.500V4A3.500 3.500 0 0 1 9.500 4V8" stroke="#fff" strokeWidth="1.200" />
    <rect y="7.500" width="12" height="9.500" rx=".5" fill="#fff" />
    <path d="M4 11.500L6 13.500L8 11.500" stroke={tone} strokeWidth="1.300" />
  </svg>
);

const ChatGlyph = () => (
  <svg width="25" height="18" viewBox="0 0 25 18">
    <path d="M5 0H19Q24.500 0 24.500 6V12Q24.500 18 19 18H0V6Q0 0 5 0z" fill="#fff" />
    <path d="M5 6.500H20M5 12H14" stroke="#fdc516" strokeWidth="2" />
  </svg>
);

/* ---------- data ---------- */

const NAV = [
  { label: "Organizations", icon: <FaHome size={18} /> },
  { label: "Reports", icon: <FaChartBar size={16} /> },
  { label: "Partners", icon: <FaUsers size={20} /> },
  { label: "Products", icon: <FaDropbox size={16} /> },
  { label: "Orders", icon: <FaCubes size={17} /> },
  { label: "PDP Orders", icon: <FaListAlt size={16} /> },
  { label: "Transportation", icon: <FaRoad size={18} />, active: true },
  { label: "Tasks", icon: <FaCalendarAlt size={16} /> },
  { label: "Settings", icon: <IoSettingsOutline size={18} />, split: true },
];

const FACTS = [
  ["Vehicle Type", "XETAI"],
  ["Plate", "29C-63633"],
  ["Assigned", "Hoàng Thị Khanh"],
  ["Temp. Config", "Frozen, Ambient, Chilled"],
  ["Temp. Zones", "2"],
  ["Position", "N/A"],
  ["Speed", "N/A"],
  ["Start Time", "8:00"],
  ["Stop Time", "24:00"],
];

const TRIPS = [
  {
    plate: "HK-0012", from: 15.48, to: 19.42, driver: 16.92,
    stops: [{ at: 15.72, len: 0.36, late: true }, { at: 17.5, len: 0.28 }],
  },
  {
    plate: "HK-0013", from: 15.48, to: 20.9, driver: 17.66,
    stops: [
      { at: 16.26, len: 0.3, late: true },
      { at: 17.12, len: 0.3, late: true },
      { at: 17.52, len: 0.3, late: true },
      { at: 18.66, len: 0.22 },
    ],
  },
];

const TOTALS: [string, React.ReactNode][] = [
  ["Orders", "2"],
  ["Distance", "468.24 km"],
  ["Costs", "10,951,237 VND"],
  ["Revenues", "0 VND"],
  ["Productivity", "-10,951,237 VND"],
  ["Revenues/Distance", "0VND/km"],
  ["Weight/Capacity", "0/2,000 kg"],
  ["Volume/Capacity", <>0/12.50 m<sup>3</sup></>],
];

const pct = (hours: number) => `${(hours / 24) * 100}%`;
const HOURS = Array.from({ length: 12 }, (_, i) => (i + 1) * 2);

export default function App() {
  return (
    <Page>
      <GlobalStyle />
      <TopBar>
        <Logo href="#"><LogoMark />ABIVIN</Logo>
        <MenuButton aria-label="Toggle menu"><span /><span /><span /></MenuButton>
        <Account>
          <Avatar>NK</Avatar>
          <UserButton>Nguyen Hai Khanh <FaChevronDown size={9} /></UserButton>
          <Inbox aria-label="Messages"><EnvelopeOpen /><InboxCount>157</InboxCount></Inbox>
        </Account>
      </TopBar>
      <Body>
        <Sidebar>
          {NAV.map((n) => (
            <NavLink key={n.label} href="#" $active={n.active} $split={n.split}>
              <NavIcon>{n.icon}</NavIcon>{n.label}
            </NavLink>
          ))}
          <SideFooter>
            <ChatButton aria-label="Open chat"><ChatGlyph /><ChatCount>2</ChatCount></ChatButton>
            <LanguageButton><Ring />English</LanguageButton>
          </SideFooter>
        </Sidebar>
        <Main>
          <MapRow>
            <MapArea>
              <RegionMap />
              <MapTools>
                <ToolRow>
                  <ToolButton $gap $pad={16}><FaArrowLeft size={12} />VEHICLE LIST</ToolButton>
                  <ToolButton $clear $pad={14}>NHÀ XE - 17/06/2020</ToolButton>
                  <ToolButton $pad={18} aria-label="Share"><FaShare size={12} /></ToolButton>
                </ToolRow>
                <AreaButton aria-label="Select area" />
              </MapTools>
              <MapType>
                <MapTypeButton $on>Map</MapTypeButton>
                <MapTypeButton>Satellite</MapTypeButton>
              </MapType>
              <Pointer width="13" height="20" viewBox="0 0 13 20">
                <path d="M1 1V16L4.500 12.800L7 18.500L9.300 17.500L7 12H11.800z" fill="#fff" stroke="#222" />
              </Pointer>
            </MapArea>
            <Panel>
              <PanelHead>Vehicle HK-0013<button aria-label="Close panel"><FaTimes size={13} /></button></PanelHead>
              <Facts>
                {FACTS.map(([k, v]) => (
                  <React.Fragment key={k}><dt>{k}</dt><dd>{v}</dd></React.Fragment>
                ))}
              </Facts>
              <PanelLinks>
                <a href="#"><FaClipboardList size={14} />Packing List</a>
                <a href="#"><FaBuilding size={15} />Order List</a>
              </PanelLinks>
            </Panel>
          </MapRow>
          <section>
            <PlanBar>
              <PlanToggle aria-label="Toggle plan" />
              PLAN
              <PlanTools>
                <PlanTool $width={26} aria-label="Sort"><FaArrowDown size={12} /></PlanTool>
                <PlanTool $width={36} $on>ALL</PlanTool>
                <PlanTool $width={46} aria-label="Compact rows"><Dash $width={23} /></PlanTool>
                <PlanTool $width={46} aria-label="Large rows"><Dash $width={20} /><Dash $width={20} /></PlanTool>
              </PlanTools>
            </PlanBar>
            <TimeRow $height={30} $tone={NAVY}>
              <HeadCell><span /><span>TIMELINE</span><span /></HeadCell>
              <Hours><DayLabel>17/06/2020</DayLabel></Hours>
              <Rest />
            </TimeRow>
            <TimeRow $height={20} $tone={BLUE}>
              <HeadCell><FaEye size={16} /><span>VEHICLES</span><FaDownload size={14} /></HeadCell>
              <Hours>
                {HOURS.map((h) => <Hour key={h} style={{ left: pct(h) }}>{h}:00</Hour>)}
              </Hours>
              <Rest />
            </TimeRow>
            <Schedule>
              <Vehicles>
                {TRIPS.map((t) => (
                  <VehicleRow key={t.plate}>
                    <FaEye size={16} />
                    <VehicleName>XETAI<small>{t.plate}</small></VehicleName>
                    <FaTruck size={32} />
                  </VehicleRow>
                ))}
              </Vehicles>
              <Tracks>
                {TRIPS.map((t) => (
                  <Track key={t.plate}>
                    <Span style={{ left: pct(t.from), width: pct(t.to - t.from) }} />
                    <Line style={{ left: pct(t.from), width: pct(t.to - t.from) }} />
                    <Handle style={{ left: pct(t.from) }} />
                    <Handle $end style={{ left: pct(t.to) }} />
                    {t.stops.map((s, i) => (
                      <Stop key={i} $late={s.late} style={{ left: pct(s.at), width: pct(s.len) }}>{i + 1}</Stop>
                    ))}
                    <Driver aria-label="Driver" style={{ left: pct(t.driver) }}><FaUser size={15} /></Driver>
                    <Watch aria-label="Show trip" style={{ left: pct(t.driver) }}><FaEye size={21} /></Watch>
                  </Track>
                ))}
              </Tracks>
              <ScrollArea>
                <ScrollRail><Tip $up /><ScrollThumb /><Tip /></ScrollRail>
              </ScrollArea>
            </Schedule>
            <Footer>
              <Totals>
                {TOTALS.map(([k, v]) => <div key={k}><dt>{k}</dt><dd>{v}</dd></div>)}
              </Totals>
              <Actions>
                <Pill $tone={BLUE} $tight>Actions <FaChevronUp size={10} /></Pill>
                <Pill $tone="#f7630c"><Lock tone="#f7630c" />Unlock</Pill>
                <Pill $tone={GREEN}><Lock tone={GREEN} />Lock Route</Pill>
                <Pill $tone="#ffb74d" $flat><Lock tone="#ffb74d" />Optimize<Highlight $inset="-19px -4px -7px -4px" /></Pill>
              </Actions>
            </Footer>
          </section>
        </Main>
      </Body>
      <DialogLayer>
        <Dialog onSubmit={(e) => e.preventDefault()}>
          <DialogHead>
            <h2>OPTIMIZE ROUTE</h2>
            <button type="button" aria-label="Close">
              <svg width="16" height="16" viewBox="0 0 16 16" stroke="#fff" strokeWidth="1.600"><path d="M1.500 1.500L14.500 14.500M14.500 1.500L1.500 14.500" /></svg>
            </button>
          </DialogHead>
          <DialogBody>
            <p>Optimize route for <b>Nhà xe</b> on <Date>17-06-2020<Highlight $inset="-10px -11px -9px -5px" /></Date></p>
            <Field>
              Cut-off time: <i>*</i>
              <NumberInput type="number" defaultValue={5} />
            </Field>
          </DialogBody>
          <DialogActions>
            <OptimizeButton type="submit">OPTIMIZE<Highlight $inset="3px -12px -1px -16px" /></OptimizeButton>
          </DialogActions>
        </Dialog>
      </DialogLayer>
    </Page>
  );
}
